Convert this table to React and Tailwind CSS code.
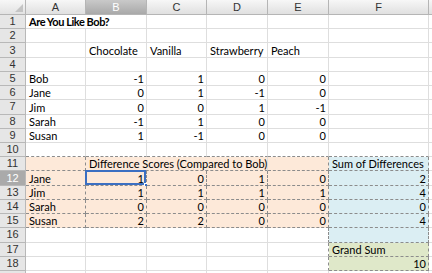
import React from "react";

const COLS = ["A", "B", "C", "D", "E", "F"];
const ROWS = Array.from({ length: 19 }, (_, i) => i + 1);

// Cell contents keyed by address
const DATA = {
  A1: "Are You Like Bob?",
  B3: "Chocolate", C3: "Vanilla", D3: "Strawberry", E3: "Peach",
  A5: "Bob", B5: -1, C5: 1, D5: 0, E5: 0,
  A6: "Jane", B6: 0, C6: 1, D6: -1, E6: 0,
  A7: "Jim", B7: 0, C7: 0, D7: 1, E7: -1,
  A8: "Sarah", B8: -1, C8: 1, D8: 0, E8: 0,
  A9: "Susan", B9: 1, C9: -1, D9: 0, E9: 0,
  B11: "Difference Scores (Compared to Bob)", F11: "Sum of Differences",
  A12: "Jane", B12: 1, C12: 0, D12: 1, E12: 0, F12: 2,
  A13: "Jim", B13: 1, C13: 1, D13: 1, E13: 1, F13: 4,
  A14: "Sarah", B14: 0, C14: 0, D14: 0, E14: 0, F14: 0,
  A15: "Susan", B15: 2, C15: 2, D15: 0, E15: 0, F15: 4,
  F17: "Grand Sum",
  F18: 10,
};

const CELL_FONT = { fontFamily: 'Lato, "Liberation Sans", Arial, sans-serif' };
const HEAD_FONT = { fontFamily: '"Liberation Sans", Arial, sans-serif' };

function fillFor(c, r) {
  if (r >= 11 && r <= 15 && c !== "F") return "bg-[#fde9d9]";
  if (c === "F" && r >= 11 && r <= 16) return "bg-[#dbeef3]";
  if (c === "F" && (r === 17 || r === 18)) return "bg-[#dfe8c9]";
  return "bg-white";
}

function dashedRight(c, r) {
  if (r >= 11 && r <= 15) {
    if (r === 11 && (c === "B" || c === "C")) return false;
    return true;
  }
  if (r >= 16 && r <= 18 && (c === "E" || c === "F")) return true;
  return false;
}

function dashedBottom(c, r) {
  if (r >= 10 && r <= 15) return true;
  if (c === "F" && r >= 16 && r <= 18) return true;
  return false;
}

function Cell({ c, r }) {
  const key = `${c}${r}`;
  const v = DATA[key];
  const isNum = typeof v === "number";
  const span =
    key === "A1" ? "col-span-2" : key === "B11" ? "col-span-3" : "";
  const rc = dashedRight(c, r)
    ? "border-r-[#8c8c8c] [border-right-style:dashed]"
    : "border-r-[#dedede]";
  const bc = dashedBottom(c, r)
    ? "border-b-[#8c8c8c] [border-bottom-style:dashed]"
    : "border-b-[#dedede]";
  return (
    <div
      style={CELL_FONT}
      className={`relative flex items-end overflow-visible whitespace-nowrap border-r border-b ${rc} ${bc} ${fillFor(
        c,
        r
      )} ${span} ${isNum ? "justify-end pr-[2px]" : "pl-[3px]"} text-[11px] leading-[12px] text-black ${
        key === "A1" ? "font-bold tracking-[-0.45px]" : ""
      }`}
    >
      {v !== undefined ? String(v) : ""}
      {key === "B12" && (
        <>
          <div className="pointer-events-none absolute -left-[1px] -top-[1px] right-0 bottom-0 border-2 border-[#3b6fc2]" />
          <div className="absolute -right-[3px] -bottom-[3px] h-[5px] w-[5px] border border-white bg-[#3b6fc2]" />
        </>
      )}
    </div>
  );
}

function skip(c, r) {
  return (r === 1 && c === "B") || (r === 11 && (c === "C" || c === "D"));
}

export default function App() {
  return (
    <div className="h-[273px] w-[432px] overflow-hidden bg-white" style={HEAD_FONT}>
      <div className="grid grid-cols-[26px_60px_61px_60px_61px_61px_100px_1fr] grid-rows-[15px_repeat(19,14.22px)]">
        {/* corner */}
        <div className="relative border-r border-b border-[#b5b5b5] bg-linear-to-b from-[#f7f7f7] to-[#e2e2e2]">
          <svg className="absolute right-[2px] bottom-[2px]" width="8" height="8" viewBox="0 0 8 8">
            <path d="M8 0 L8 8 L0 8 Z" fill="#c4c4c4" />
          </svg>
        </div>
        {COLS.map((c) => (
          <div
            key={c}
            className={`flex items-center justify-center border-r border-b border-[#b5b5b5] text-[11px] ${
              c === "B"
                ? "bg-linear-to-b from-[#c9c9c9] to-[#a9a9a9] text-white"
                : "bg-linear-to-b from-[#f7f7f7] to-[#e0e0e0] text-[#333]"
            }`}
          >
            {c}
          </div>
        ))}
        <div className="border-b border-[#b5b5b5] bg-linear-to-b from-[#f7f7f7] to-[#e0e0e0]" />

        {ROWS.map((r) => (
          <React.Fragment key={r}>
            <div
              className={`flex items-center justify-center border-r border-b border-[#b8b8b8] text-[11px] leading-none ${
                r === 12
                  ? "bg-[#aaaaaa] text-white"
                  : "bg-[#e6e6e6] text-[#333]"
              }`}
            >
              {r < 19 ? r : ""}
            </div>
            {COLS.map((c) => (skip(c, r) ? null : <Cell key={c} c={c} r={r} />))}
            <div className="border-b border-[#dedede] bg-white" />
          </React.Fragment>
        ))}
      </div>
    </div>
  );
}
